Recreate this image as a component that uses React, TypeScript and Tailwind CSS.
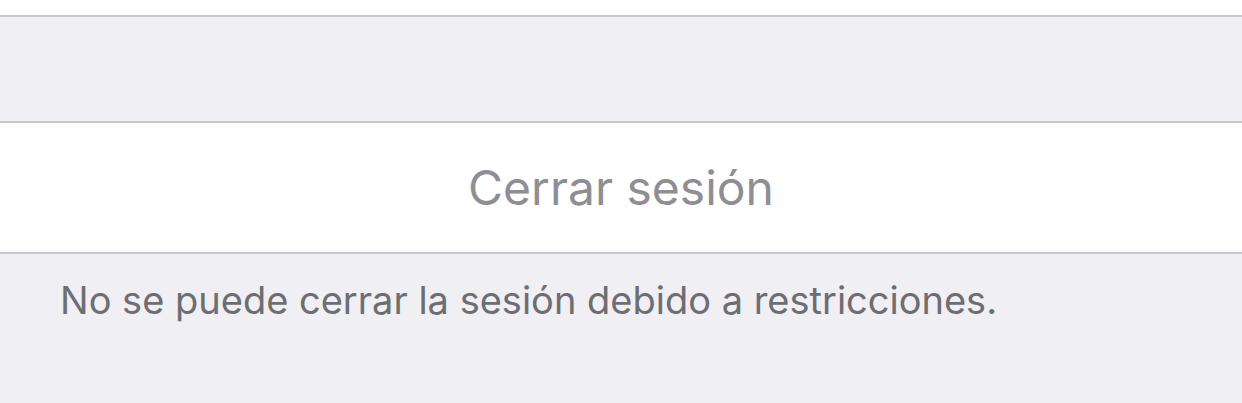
import React from 'react';

// Settings-style "sign out" group with a footer note
export default function App() {
  return (
    <div className="w-[1242px] h-[403px] overflow-hidden bg-[#efeff4] font-['Inter','Liberation_Sans',sans-serif]">
      <div className="h-[17px] bg-white border-b-2 border-[#c8c7cc]" />
      <div className="h-[104px]" />
      <div className="h-[133px] bg-white border-y-2 border-[#c8c7cc] flex items-center justify-center">
        <span className="text-[48px] text-[#8e8e93] leading-none">Cerrar sesión</span>
      </div>
      <div className="px-[60px] pt-[27px]">
        <p className="text-[38px] text-[#6d6d72] leading-none">
          No se puede cerrar la sesión debido a restricciones.
        </p>
      </div>
    </div>
  );
}
